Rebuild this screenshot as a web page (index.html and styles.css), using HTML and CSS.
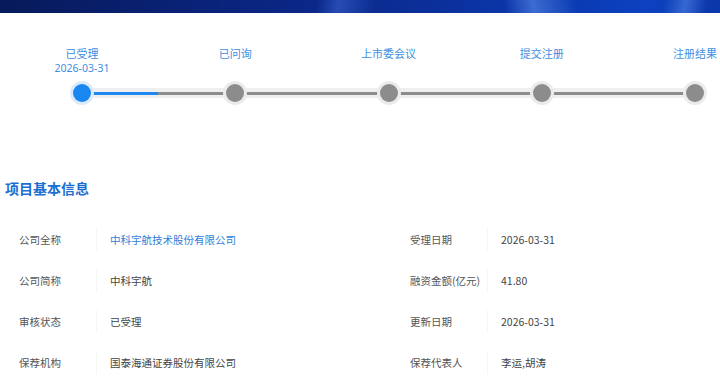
FILE: index.html
```html
<!DOCTYPE html>
<html lang="zh-CN">
<head>
    <meta charset="UTF-8">
    <meta name="viewport" content="width=device-width, initial-scale=1.0">
    <title>项目基本信息</title>
    <link rel="stylesheet" href="styles.css">
</head>
<body>
    <div class="banner"></div>

    <div class="timeline">
        <div class="steps">
            <div class="step">
                <span class="step-name">已受理</span>
                <span class="step-date">2026-03-31</span>
            </div>
            <div class="step"><span class="step-name">已问询</span></div>
            <div class="step"><span class="step-name">上市委会议</span></div>
            <div class="step"><span class="step-name">提交注册</span></div>
            <div class="step"><span class="step-name">注册结果</span></div>
        </div>
        <div class="rail">
            <div class="rail-progress" style="width: 76px"></div>
            <div class="dots">
                <span class="dot active"></span>
                <span class="dot"></span>
                <span class="dot"></span>
                <span class="dot"></span>
                <span class="dot"></span>
            </div>
        </div>
    </div>

    <h2 class="section-title">项目基本信息</h2>

    <div class="info-table">
        <div class="info-label">公司全称</div>
        <div class="info-value"><a href="#" class="link">中科宇航技术股份有限公司</a></div>
        <div class="info-label">受理日期</div>
        <div class="info-value">2026-03-31</div>

        <div class="info-label">公司简称</div>
        <div class="info-value">中科宇航</div>
        <div class="info-label">融资金额(亿元)</div>
        <div class="info-value">41.80</div>

        <div class="info-label">审核状态</div>
        <div class="info-value">已受理</div>
        <div class="info-label">更新日期</div>
        <div class="info-value">2026-03-31</div>

        <div class="info-label">保荐机构</div>
        <div class="info-value">国泰海通证券股份有限公司</div>
        <div class="info-label">保荐代表人</div>
        <div class="info-value">李运,胡涛</div>
    </div>
</body>
</html>
```

FILE: styles.css
```css
body {
    margin: 0;
    font-family: "Noto Sans CJK SC", "Noto Sans", sans-serif;
    background: #fff;
    color: #444;
    overflow: hidden;
}
.banner {
    height: 13px;
    background:
        linear-gradient(100deg, transparent 44%, rgba(90, 140, 255, 0.35) 47%, transparent 52%),
        linear-gradient(80deg, transparent 70%, rgba(120, 170, 255, 0.45) 74%, transparent 80%),
        linear-gradient(100deg, transparent 92%, rgba(120, 170, 255, 0.4) 95%, transparent 98%),
        linear-gradient(90deg, #071a5a 0%, #0a237a 30%, #0b2d94 55%, #0b38ae 75%, #0c41c0 90%, #0a36a8 100%);
}

/* 进度条 */
.timeline {
    margin: 33px 0 0 82px;
    width: 613px;
}
.steps {
    display: flex;
    justify-content: space-between;
    height: 35px;
}
.step {
    width: 0;
    display: flex;
    flex-direction: column;
    align-items: center;
    white-space: nowrap;
    font-size: 11px;
    line-height: 15px;
    color: #3d8fe2;
}
.step-date {
    font-family: "Noto Sans", sans-serif;
    font-size: 10.5px;
    line-height: 14px;
}
.rail {
    position: relative;
    height: 24px;
}
.rail::before {
    content: "";
    position: absolute;
    left: 0;
    right: 0;
    top: 7px;
    height: 10px;
    background: #efefef;
}
.rail::after {
    content: "";
    position: absolute;
    left: 0;
    right: 0;
    top: 11px;
    height: 3px;
    background: #8c8c8c;
}
.rail-progress {
    position: absolute;
    left: 0;
    top: 11px;
    height: 3px;
    background: #1e88ee;
    z-index: 1;
}
.dots {
    position: relative;
    z-index: 2;
    display: flex;
    justify-content: space-between;
    height: 24px;
    align-items: center;
}
.dot {
    width: 0;
    display: flex;
    justify-content: center;
}
.dot::before {
    content: "";
    flex: none;
    width: 18px;
    height: 18px;
    border-radius: 50%;
    background: #8c8c8c;
    box-shadow: 0 0 0 3px #ebebeb;
}
.dot.active::before {
    background: #1a86f0;
    box-shadow: 0 0 0 3px #dcebfb;
}

/* 基本信息 */
.section-title {
    margin: 73px 0 0 5px;
    font-size: 14px;
    line-height: 20px;
    font-weight: bold;
    color: #1b6fd2;
}
.info-table {
    display: grid;
    grid-template-columns: 96px 295px 96px 1fr;
    margin-top: 21px;
    font-size: 10.5px;
}
.info-label {
    height: 41px;
    line-height: 41px;
    padding-left: 19px;
    color: #555;
    white-space: nowrap;
}
.info-value {
    height: 23px;
    line-height: 23px;
    margin: 9px 0;
    padding-left: 13px;
    border-left: 1px solid #f6f6f6;
    color: #444;
}
.link {
    color: #2f7ed8;
    text-decoration: none;
}
```
